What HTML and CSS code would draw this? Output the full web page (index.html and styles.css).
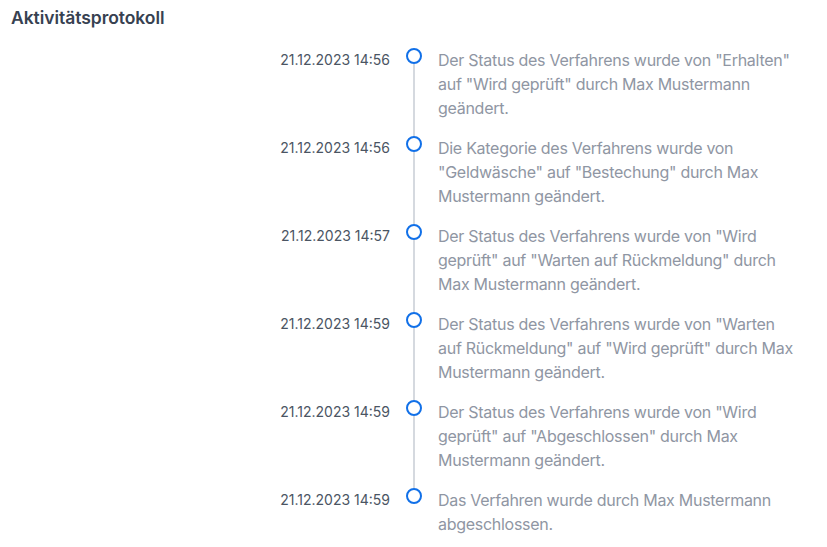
FILE: index.html
```html
<!DOCTYPE html>
<html lang="de">
<head>
  <meta charset="UTF-8">
  <title>Aktivitätsprotokoll</title>
  <link rel="stylesheet" href="styles.css">
</head>
<body>
  <h3 class="title">Aktivitätsprotokoll</h3>

  <ul class="log">
    <li class="entry">
      <span class="time">21.12.2023 14:56</span>
      <span class="marker"><i class="dot"></i><i class="line"></i></span>
      <p class="text">Der Status des Verfahrens wurde von "Erhalten" auf "Wird geprüft" durch Max Mustermann geändert.</p>
    </li>
    <li class="entry">
      <span class="time">21.12.2023 14:56</span>
      <span class="marker"><i class="dot"></i><i class="line"></i></span>
      <p class="text">Die Kategorie des Verfahrens wurde von "Geldwäsche" auf "Bestechung" durch Max Mustermann geändert.</p>
    </li>
    <li class="entry">
      <span class="time">21.12.2023 14:57</span>
      <span class="marker"><i class="dot"></i><i class="line"></i></span>
      <p class="text">Der Status des Verfahrens wurde von "Wird geprüft" auf "Warten auf Rückmeldung" durch Max Mustermann geändert.</p>
    </li>
    <li class="entry">
      <span class="time">21.12.2023 14:59</span>
      <span class="marker"><i class="dot"></i><i class="line"></i></span>
      <p class="text">Der Status des Verfahrens wurde von "Warten auf Rückmeldung" auf "Wird geprüft" durch Max Mustermann geändert.</p>
    </li>
    <li class="entry">
      <span class="time">21.12.2023 14:59</span>
      <span class="marker"><i class="dot"></i><i class="line"></i></span>
      <p class="text">Der Status des Verfahrens wurde von "Wird geprüft" auf "Abgeschlossen" durch Max Mustermann geändert.</p>
    </li>
    <li class="entry">
      <span class="time">21.12.2023 14:59</span>
      <span class="marker"><i class="dot"></i></span>
      <p class="text">Das Verfahren wurde durch Max Mustermann abgeschlossen.</p>
    </li>
  </ul>
</body>
</html>
```

FILE: styles.css
```css
body {
  margin: 0;
  padding: 6px 0 0 11px;
  font-family: Inter, "Noto Sans", sans-serif;
  background: #fff;
}
.title {
  margin: 0;
  font-size: 17.5px;
  line-height: 24px;
  font-weight: 600;
  color: #374151;
  letter-spacing: -0.05px;
}
.log {
  list-style: none;
  margin: 18px 0 0;
  padding: 0;
}
.entry {
  display: grid;
  grid-template-columns: 379px 16px 358px;
  column-gap: 16px;
}
.time {
  text-align: right;
  font-size: 14px;
  line-height: 24px;
  color: #4b5563;
}
.marker {
  display: flex;
  flex-direction: column;
  align-items: center;
}
.dot {
  width: 16px;
  height: 16px;
  box-sizing: border-box;
  border: 2.5px solid #1170e8;
  border-radius: 50%;
  flex: none;
}
.line {
  flex: 1;
  width: 2px;
  background: #d5d9df;
}
.text {
  margin: 0;
  padding-bottom: 16px;
  font-size: 16px;
  line-height: 24px;
  letter-spacing: -0.28px;
  color: #8f96a3;
}
```
